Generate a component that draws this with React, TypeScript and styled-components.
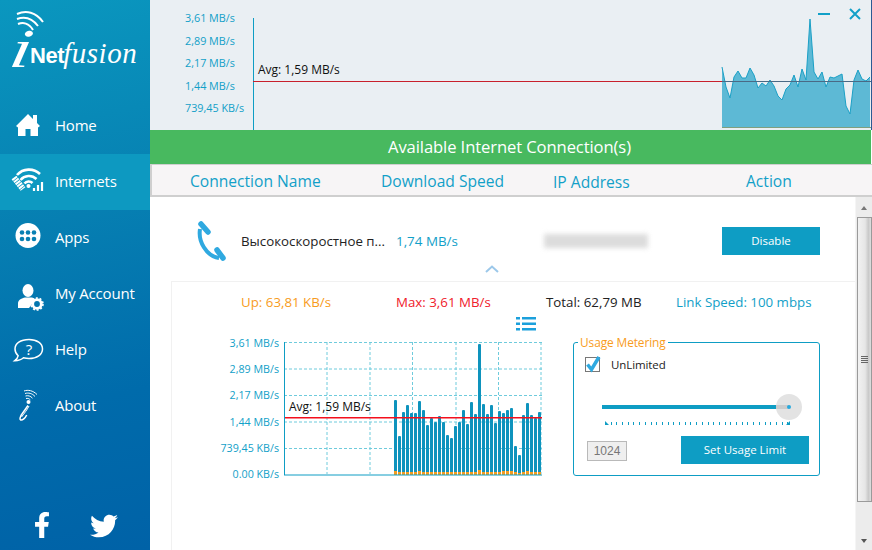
import React from 'react';
import styled, { createGlobalStyle } from 'styled-components';
import { FaFacebookF, FaTwitter } from 'react-icons/fa';

const GlobalStyle = createGlobalStyle`
  html, body {
    margin: 0;
    padding: 0;
    background: #fff;
    font-family: "Open Sans", "Noto Sans", sans-serif;
  }
  * {
    box-sizing: border-box;
  }
`

const Window = styled.div`
  width: 872px;
  height: 550px;
  display: flex;
  overflow: hidden;
`

const Sidebar = styled.aside`
  width: 150px;
  flex-shrink: 0;
  display: flex;
  flex-direction: column;
  background: linear-gradient(168deg, #0a97bf 0%, #0782b3 35%, #006bab 72%, #0062a7 100%);
`

const Logo = styled.div`
  position: relative;
  height: 98px;
  display: flex;
  align-items: baseline;
  padding: 30px 0 0 8px;
  color: #fff;
`

const LogoArcs = styled.svg`
  position: absolute;
  left: 14px;
  top: 8px;
`

const LogoI = styled.span`
  font-family: "Liberation Serif", serif;
  font-style: italic;
  font-size: 52px;
  line-height: 32px;
  width: 22px;
  transform-origin: left bottom;
  transform: translate(0, 4px) scale(1.45, 1.05) skewX(-8deg);
`

const LogoNet = styled.span`
  font-family: "Liberation Sans", sans-serif;
  font-weight: 700;
  font-size: 22px;
  line-height: 32px;
  letter-spacing: -0.4px;
`

const LogoFusion = styled.span`
  font-family: "Liberation Serif", serif;
  font-style: italic;
  font-size: 29px;
  line-height: 32px;
  letter-spacing: 0.5px;
  margin-left: -1px;
`

const Nav = styled.nav`
  display: flex;
  flex-direction: column;
`

const NavItem = styled.a<{ $active?: boolean }>`
  height: 56px;
  display: flex;
  align-items: center;
  padding-bottom: 2px;
  color: #fff;
  font-size: 15px;
  letter-spacing: -0.2px;
  background: ${p => (p.$active ? '#0d99c1' : 'transparent')};
`

const NavIcon = styled.span`
  width: 55px;
  height: 56px;
  flex-shrink: 0;
  display: flex;
  margin-top: 2px;
`

const Social = styled.div`
  margin-top: auto;
  height: 56px;
  display: flex;
  align-items: flex-start;
  gap: 35px;
  padding: 18px 0 0 29px;
  color: #fff;
`

const Main = styled.main`
  flex: 1;
  min-width: 0;
  display: flex;
  flex-direction: column;
`

const TopChart = styled.section`
  position: relative;
  height: 130px;
  display: flex;
  background: #eaeff3;
  border-right: 1px solid #2c5a93;
`

const TopAxis = styled.div`
  width: 103px;
  flex-shrink: 0;
  display: flex;
  flex-direction: column;
  padding: 7px 0 0 35px;
`

const TopAxisLabel = styled.span`
  height: 22.5px;
  line-height: 22.5px;
  font-size: 10.8px;
  color: #12a0c8;
  white-space: nowrap;
`

const AvgLabel = styled.span`
  position: absolute;
  font-size: 12px;
  color: #111;
  white-space: nowrap;
`

const TopAvg = styled(AvgLabel)`
  left: 108px;
  top: 61px;
`

const WindowControls = styled.div`
  position: absolute;
  right: 10px;
  top: 8px;
  display: flex;
  align-items: center;
  gap: 19px;
`

const Banner = styled.div`
  height: 34px;
  display: flex;
  align-items: center;
  justify-content: center;
  padding: 0 2px 2px 0;
  background: #48b95f;
  color: #fff;
  font-size: 16.6px;
  letter-spacing: -0.1px;
  border-right: 1px solid #fff;
`

const TableHead = styled.div`
  height: 33px;
  display: grid;
  grid-template-columns: 191px 172px 193px auto;
  align-items: center;
  padding: 2px 0 0 38px;
  background: #f7f5f6;
  border: solid #cfcfcf;
  border-width: 1px 0 2px 2px;
  color: #12a0c8;
  font-size: 15.6px;
  white-space: nowrap;
`

const LowHeadCell = styled.span`
  margin-top: 2px;
`

const Body = styled.div`
  flex: 1;
  min-height: 0;
  display: flex;
  background: #fff;
`

const Content = styled.div`
  flex: 1;
  min-width: 0;
  display: flex;
  flex-direction: column;
`

const ConnectionRow = styled.div`
  height: 84px;
  position: relative;
  display: grid;
  grid-template-columns: 46px 155px 148px 178px 98px;
  align-items: center;
  padding: 4px 0 0 45px;
`

const PhoneIcon = styled.svg`
  display: block;
`

const ConnectionName = styled.span`
  font-size: 13.300px;
  color: #222;
  white-space: nowrap;
`

const ConnectionSpeed = styled.span`
  font-size: 13.400px;
  color: #12a0c8;
`

const BlurredAddress = styled.div`
  width: 104px;
  height: 14px;
  background: #dcdcdc;
  filter: blur(2.5px);
`

const ActionButton = styled.button<{ $width: number }>`
  width: ${p => p.$width}px;
  height: 28px;
  padding: 0 0 2px;
  border: 0;
  background: #0e9dc4;
  color: #fff;
  font-family: inherit;
  font-size: 11.5px;
`

const Chevron = styled.svg`
  position: absolute;
  left: 335px;
  top: 68px;
`

const Detail = styled.div`
  flex: 1;
  margin-left: 21px;
  border: solid #f1f1f1;
  border-width: 1px 0 0 1px;
  position: relative;
`

const Stats = styled.div`
  display: grid;
  grid-template-columns: 155px 150px 130px auto;
  padding: 12px 0 0 69px;
  font-size: 13.300px;
  line-height: 17px;
  white-space: nowrap;
`

const Stat = styled.span<{ $color: string }>`
  color: ${p => p.$color};
`

const ListIcon = styled.svg`
  position: absolute;
  left: 344px;
  top: 35px;
`

const DetailBody = styled.div`
  display: flex;
  align-items: flex-start;
  margin-top: 30px;
  padding-left: 32px;
`

const BarChart = styled.div`
  position: relative;
  display: flex;
  width: 338px;
`

const BarAxis = styled.div`
  width: 80px;
  height: 144px;
  flex-shrink: 0;
  display: flex;
  flex-direction: column;
  justify-content: space-between;
  padding: 0 5px 0 0;
  margin-top: -4px;
  text-align: right;
  font-size: 10.7px;
  line-height: 13px;
  color: #12a0c8;
  white-space: nowrap;
`

const BarAvg = styled(AvgLabel)`
  left: 85px;
  top: 57px;
`

const UsageBox = styled.div`
  position: relative;
  width: 247px;
  height: 134px;
  margin: 1px 0 0 31px;
  padding: 13px 10px 0 11px;
  border: 1px solid #0e9dc4;
  border-radius: 3px;
  display: flex;
  flex-direction: column;
`

const UsageLegend = styled.span`
  position: absolute;
  left: 4px;
  top: -9px;
  padding: 0 2px;
  background: #fff;
  color: #f89c1c;
  font-size: 11.900px;
  line-height: 16px;
  letter-spacing: -0.1px;
  white-space: nowrap;
`

const CheckRow = styled.div`
  display: flex;
  align-items: center;
  gap: 11px;
  height: 16px;
  font-size: 11.500px;
  letter-spacing: -0.1px;
  color: #222;
`

const CheckBox = styled.span`
  position: relative;
  width: 15px;
  height: 15px;
  border: 1px solid #777;
  background: #fff;
`

const CheckMark = styled.svg`
  position: absolute;
  left: -1px;
  top: -4px;
`

const Slider = styled.div`
  position: relative;
  height: 4px;
  margin: 33px 20px 0 17px;
  background: #0e9dc4;
`

const SliderThumb = styled.span`
  position: absolute;
  right: -13px;
  top: -11px;
  width: 26px;
  height: 26px;
  border-radius: 50%;
  background: #e3e3e3;
  display: flex;
  align-items: center;
  justify-content: center;
  &::before {
    content: "";
    position: absolute;
    left: 0;
    top: 11px;
    width: 13px;
    height: 4px;
    background: #cbcbcb;
  }
  &::after {
    content: "";
    position: relative;
    width: 4px;
    height: 4px;
    border-radius: 50%;
    background: #27a9de;
  }
`

const SliderTicks = styled.div`
  position: relative;
  height: 3px;
  margin: 13px 19px 0 20px;
  background: repeating-linear-gradient(90deg, #0e9dc4 0 1px, transparent 1px 5.7px);
  &::before, &::after {
    content: "";
    position: absolute;
    bottom: 0;
    border-bottom: 4px solid #0e9dc4;
  }
  &::before {
    left: 0;
    border-right: 4px solid transparent;
  }
  &::after {
    right: 0;
    border-left: 4px solid transparent;
  }
`

const UsageFooter = styled.div`
  display: flex;
  align-items: center;
  justify-content: space-between;
  margin-top: 11px;
  padding-left: 2px;
`

const LimitInput = styled.div`
  width: 40px;
  height: 20px;
  margin-top: 2px;
  border: 1px solid #b9b9b9;
  background: #efefef;
  color: #777;
  font-family: "Liberation Sans", sans-serif;
  font-size: 12px;
  line-height: 19px;
  text-align: center;
`

const Scrollbar = styled.div`
  width: 17px;
  flex-shrink: 0;
  display: flex;
  flex-direction: column;
  align-items: center;
  background: #ececec;
  border-left: 1px solid #f5f5f5;
`

const ScrollArrow = styled.span<{ $down?: boolean }>`
  width: 0;
  height: 0;
  margin: ${p => (p.$down ? 'auto 0 7px' : '9px 0 7px')};
  border: 3.5px solid transparent;
  ${p => (p.$down ? 'border-top: 4px solid #555; border-bottom: 0;' : 'border-bottom: 4px solid #777; border-top: 0;')}
`

const ScrollThumb = styled.div`
  width: 15px;
  height: 285px;
  border: 1px solid #9a9a9a;
  background: linear-gradient(90deg, #f2f2f2 0%, #e6e6e6 55%, #c9c9c9 80%, #dedede 100%);
  display: flex;
  flex-direction: column;
  justify-content: center;
  align-items: center;
  gap: 1px;
`

const GripLine = styled.span`
  width: 7px;
  height: 1px;
  background: #666;
`

const topLabels = ['3,61 MB/s', '2,89 MB/s', '2,17 MB/s', '1,44 MB/s', '739,45 KB/s'];
const barLabels = ['3,61 MB/s', '2,89 MB/s', '2,17 MB/s', '1,44 MB/s', '739,45 KB/s', '0.00 KB/s'];

// y of the area line, one sample every 4px starting at x=722
const areaSamples = [
  67, 87, 98, 77, 71, 78, 78, 68, 75, 88, 83, 86, 80, 86, 96, 100, 89, 85, 75, 87,
  69, 80, 19, 72, 79, 72, 87, 77, 78, 76, 74, 106, 114, 80, 70, 79, 81, 77,
];

// bar tops in chart px, one bar every 4px
const barTops = [
  59, 95, 71, 64, 72, 72, 60, 69, 84, 77, 81, 75, 81, 94, 97, 85, 81, 69, 83, 61,
  73, 3, 63, 73, 64, 82, 70, 72, 69, 67, 105, 114, 74, 62, 74, 77, 71,
];
const upHeights = [4, 3, 3, 3, 3, 3, 4, 3, 3, 3, 3, 3, 3, 3, 3, 3, 3, 3, 3, 3, 3, 5, 3, 3, 3, 3, 3, 4, 4, 4, 3, 2, 3, 4, 3, 3, 3];

const HomeGlyph = () => (
  <svg width="55" height="56" viewBox="0 0 55 56">
    <path fill="#fff" d="M16 28 28 16l5 5v-4h4v8l3 3-2 1.500V38h-7.500v-7h-5v7H18V29.500z" />
  </svg>
);

const WifiGlyph = () => (
  <svg width="55" height="56" viewBox="0 0 55 56" fill="none" stroke="#fff">
    <path strokeWidth="2.600" d="M17 21a16 16 0 0 1 23-1" />
    <path strokeWidth="2.600" d="M20.500 26a11 11 0 0 1 16-1" />
    <path strokeWidth="2.600" d="M24.500 29.500a5.500 5.500 0 0 1 8-.5" />
    <circle cx="28.500" cy="32" r="2" fill="#fff" stroke="none" />
    <path strokeWidth="6" strokeDasharray="2 .7" d="M14 23.500 23 35" />
    <path strokeWidth="2.200" d="M34 37v-3M38 37v-6M42 37v-9" />
  </svg>
);

const AppsGlyph = () => (
  <svg width="55" height="56" viewBox="0 0 55 56">
    <circle cx="28" cy="25.500" r="12.500" fill="#fff" />
    {[22, 28, 34].map(x =>
      [22.500, 29].map(y => <circle key={`${x}-${y}`} cx={x} cy={y} r="2.300" fill="#0880b3" />),
    )}
  </svg>
);

const AccountGlyph = () => (
  <svg width="55" height="56" viewBox="0 0 55 56">
    <ellipse cx="28" cy="24.500" rx="5.500" ry="6.500" fill="#fff" />
    <path fill="#fff" d="M18 42v-5c0-3 4-5 7-5.500h7c2 .5 3 1.500 3 2.500l-6 8z" />
    <circle cx="37" cy="38" r="4.300" fill="none" stroke="#fff" strokeWidth="2.800" />
    <circle cx="37" cy="38" r="6" fill="none" stroke="#fff" strokeWidth="1.600" strokeDasharray="2 1.770" />
  </svg>
);

const HelpGlyph = () => (
  <svg width="55" height="56" viewBox="0 0 55 56">
    <path
      fill="none"
      stroke="#fff"
      strokeWidth="1.500"
      d="M29 17.500c8 0 13.500 4 13.500 9.500S37 36.500 29 36.500c-2.500 0-4-.3-5.500-.7-2 1.800-5 2.900-8.700 2.900 1.800-1.300 3-2.900 3.400-5-2-1.700-3.200-4-3.200-6.700 0-5.500 5.500-9.500 14-9.500z"
    />
    <text x="29" y="32.500" fill="#fff" fontSize="15" textAnchor="middle" fontFamily="Open Sans, sans-serif">?</text>
  </svg>
);

const AboutGlyph = () => (
  <svg width="55" height="56" viewBox="0 0 55 56" fill="none" stroke="#fff">
    <path strokeWidth="1" d="M24 13c4-1.500 9-.5 13 3.500M25 15.500c3.500-1 7-.3 10 3M25.500 18c2.500-.7 5-.2 7 2.200M26 20.500c1.500-.4 3 0 4.300 1.300" />
    <circle cx="28.500" cy="24" r="2" fill="#fff" stroke="none" />
    <path strokeWidth="1.500" d="M28 27.500c-2 3-4.500 6-7 10-1 2-1.500 4-.3 4.500 1.700.5 4.500-1.800 6-5" />
    <path strokeWidth="1" d="M29 28c-2 4-4.500 7-7.500 11" />
  </svg>
);

const navItems = [
  { label: 'Home', icon: <HomeGlyph /> },
  { label: 'Internets', icon: <WifiGlyph />, active: true },
  { label: 'Apps', icon: <AppsGlyph /> },
  { label: 'My Account', icon: <AccountGlyph /> },
  { label: 'Help', icon: <HelpGlyph /> },
  { label: 'About', icon: <AboutGlyph /> },
];

const App: React.FC = () => {
  const areaPoints = areaSamples.map((y, i) => `${469 + i * 4},${y}`).join(' ');

  return (
    <Window>
      <GlobalStyle />
      <Sidebar>
        <Logo>
          <LogoArcs width="34" height="28" viewBox="0 0 34 28" fill="none" stroke="#fff" strokeWidth="2">
            <path d="M3 6c9-4 19-2 26 8" />
            <path d="M3 11c8-3 15-1 21 7" />
            <path d="M4 16c5-2 11-1 15 6" />
          </LogoArcs>
          <LogoI>i</LogoI>
          <LogoNet>Net</LogoNet>
          <LogoFusion>fusion</LogoFusion>
        </Logo>
        <Nav>
          {navItems.map(item => (
            <NavItem key={item.label} $active={item.active}>
              <NavIcon>{item.icon}</NavIcon>
              {item.label}
            </NavItem>
          ))}
        </Nav>
        <Social>
          <FaFacebookF size={26} />
          <FaTwitter size={28} />
        </Social>
      </Sidebar>

      <Main>
        <TopChart>
          <TopAxis>
            {topLabels.map(label => <TopAxisLabel key={label}>{label}</TopAxisLabel>)}
          </TopAxis>
          <svg width="618" height="130" viewBox="0 0 618 130">
            <line x1="0.500" y1="18" x2="0.500" y2="130" stroke="#0e9dc4" />
            <polygon points={`469,128 ${areaPoints} 617,128`} fill="#5db9d5" />
            <polyline points={areaPoints} fill="none" stroke="#1ba0c6" strokeWidth="1" />
            <line x1="0" y1="81.500" x2="618" y2="81.500" stroke="#c8202c" />
            <line x1="469" y1="81.500" x2="618" y2="81.500" stroke="#4a6a85" />
            <line x1="469" y1="127.500" x2="618" y2="127.500" stroke="#7f9f80" />
          </svg>
          <TopAvg>Avg: 1,59 MB/s</TopAvg>
          <WindowControls>
            <svg width="12" height="4" viewBox="0 0 12 4"><rect y="1" width="12" height="2" fill="#12a0c8" /></svg>
            <svg width="12" height="12" viewBox="0 0 12 12" stroke="#12a0c8" strokeWidth="2"><path d="M1 1l10 10M11 1 1 11" /></svg>
          </WindowControls>
        </TopChart>
        <Banner>Available Internet Connection(s)</Banner>
        <TableHead>
          <span>Connection Name</span>
          <span>Download Speed</span>
          <LowHeadCell>IP Address</LowHeadCell>
          <span>Action</span>
        </TableHead>
        <Body>
          <Content>
            <ConnectionRow>
              <PhoneIcon width="32" height="40" viewBox="0 0 32 40" fill="none" stroke="#2fa9e0">
                <path strokeWidth="4" d="M5 8C3 20 11 35 24 37" />
                <path strokeWidth="5.500" strokeLinecap="round" d="M6 3l7 8M22 29l6 8" />
              </PhoneIcon>
              <ConnectionName>Высокоскоростное п...</ConnectionName>
              <ConnectionSpeed>1,74 MB/s</ConnectionSpeed>
              <BlurredAddress />
              <ActionButton $width={98}>Disable</ActionButton>
              <Chevron width="14" height="8" viewBox="0 0 14 8" fill="none" stroke="#9cc8ea" strokeWidth="2"><path d="M1 7l6-5.500L13 7" /></Chevron>
            </ConnectionRow>
            <Detail>
              <Stats>
                <Stat $color="#f89c1c">Up: 63,81 KB/s</Stat>
                <Stat $color="#f0212b">Max: 3,61 MB/s</Stat>
                <Stat $color="#222">Total: 62,79 MB</Stat>
                <Stat $color="#12a0c8">Link Speed: 100 mbps</Stat>
              </Stats>
              <ListIcon width="20" height="14" viewBox="0 0 20 14" fill="#1ba0dc">
                {[0, 5.500, 11].map(y => (
                  <g key={y}>
                    <rect y={y} width="4" height="2.500" />
                    <rect x="6" y={y} width="14" height="2.500" />
                  </g>
                ))}
              </ListIcon>
              <DetailBody>
                <BarChart>
                  <BarAxis>
                    {barLabels.map(label => <span key={label}>{label}</span>)}
                  </BarAxis>
                  <svg width="258" height="135" viewBox="0 0 258 135">
                    {[43, 86, 128.500, 172, 214.500, 257].map(x => (
                      <line key={x} x1={x} y1="1" x2={x} y2="133" stroke="#6fcbdc" strokeDasharray="3 2" />
                    ))}
                    {[1.500, 28, 54.500, 81, 107.500].map(y => (
                      <line key={y} x1="0" y1={y} x2="258" y2={y} stroke="#6fcbdc" strokeDasharray="3 2" />
                    ))}
                    {barTops.map((top, i) => (
                      <g key={i}>
                        <rect x={110 + i * 4} y={top} width="3" height={134 - top} rx="1" fill="#0e93bd" />
                        <rect x={110 + i * 4} y={134 - upHeights[i]} width="3" height={upHeights[i]} fill="#f39c1f" />
                      </g>
                    ))}
                    <rect x="1" y="76" width="257" height="1.500" fill="#f40f1c" />
                    <line x1="0.500" y1="1" x2="0.500" y2="134" stroke="#0e9dc4" />
                    <line x1="0" y1="134" x2="258" y2="134" stroke="#0e9dc4" />
                  </svg>
                  <BarAvg>Avg: 1,59 MB/s</BarAvg>
                </BarChart>
                <UsageBox>
                  <UsageLegend>Usage Metering</UsageLegend>
                  <CheckRow>
                    <CheckBox>
                      <CheckMark width="17" height="19" viewBox="0 0 17 19" fill="none" stroke="#2fa9e0" strokeWidth="3.500">
                        <path d="M2.500 10.500l4 5L14 3" />
                      </CheckMark>
                    </CheckBox>
                    UnLimited
                  </CheckRow>
                  <Slider><SliderThumb /></Slider>
                  <SliderTicks />
                  <UsageFooter>
                    <LimitInput>1024</LimitInput>
                    <ActionButton $width={128}>Set Usage Limit</ActionButton>
                  </UsageFooter>
                </UsageBox>
              </DetailBody>
            </Detail>
          </Content>
          <Scrollbar>
            <ScrollArrow />
            <ScrollThumb>
              <GripLine /><GripLine /><GripLine /><GripLine />
            </ScrollThumb>
            <ScrollArrow $down />
          </Scrollbar>
        </Body>
      </Main>
    </Window>
  );
};

export default App;
